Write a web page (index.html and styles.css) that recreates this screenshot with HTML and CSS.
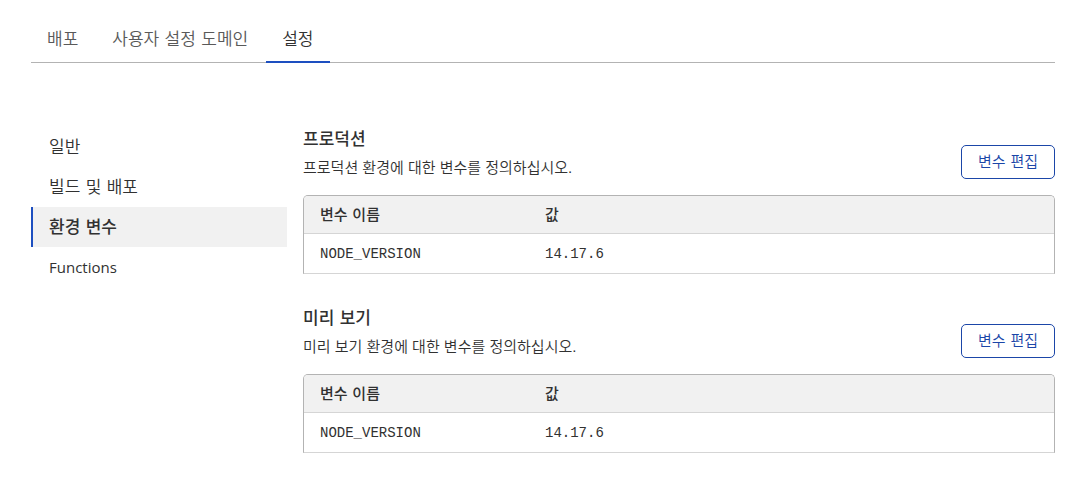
FILE: index.html
```html
<!DOCTYPE html>
<html lang="ko">
<head>
<meta charset="utf-8">
<meta name="viewport" content="width=device-width, initial-scale=1">
<title>설정 - 환경 변수</title>
<link rel="stylesheet" href="styles.css">
</head>
<body>
<nav class="tabs" aria-label="프로젝트">
  <a class="tab" href="#deployments">배포</a>
  <a class="tab" href="#domains">사용자 설정 도메인</a>
  <a class="tab tab-active" href="#settings" aria-current="page">설정</a>
</nav>
<div class="layout">
  <nav class="sidebar" aria-label="설정">
    <a class="side-link" href="#general">일반</a>
    <a class="side-link" href="#builds">빌드 및 배포</a>
    <a class="side-link side-link-active" href="#variables" aria-current="page">환경 변수</a>
    <a class="side-link side-link-latin" href="#functions">Functions</a>
  </nav>
  <main class="content">
    <section class="group">
      <header class="group-header">
        <div>
          <h2 class="title" id="production">프로덕션</h2>
          <p class="description">프로덕션 환경에 대한 변수를 정의하십시오.</p>
        </div>
        <button class="edit" type="button">변수 편집</button>
      </header>
      <table class="variables" aria-labelledby="production">
        <thead><tr><th class="name-column" scope="col">변수 이름</th><th scope="col">값</th></tr></thead>
        <tbody><tr><td>NODE_VERSION</td><td>14.17.6</td></tr></tbody>
      </table>
    </section>
    <section class="group">
      <header class="group-header">
        <div>
          <h2 class="title" id="preview">미리 보기</h2>
          <p class="description">미리 보기 환경에 대한 변수를 정의하십시오.</p>
        </div>
        <button class="edit" type="button">변수 편집</button>
      </header>
      <table class="variables" aria-labelledby="preview">
        <thead><tr><th class="name-column" scope="col">변수 이름</th><th scope="col">값</th></tr></thead>
        <tbody><tr><td>NODE_VERSION</td><td>14.17.6</td></tr></tbody>
      </table>
    </section>
  </main>
</div>
</body>
</html>
```
FILE: styles.css
```css
* {
  box-sizing: border-box;
}

body {
  margin: 0;
  padding: 14px 26px 24px 31px;
  background: #fff;
  color: #313131;
  font-family: "DejaVu Sans", "Noto Sans CJK KR", sans-serif;
  font-size: 15px;
  font-weight: 350;
  line-height: 24px;
}

.tabs {
  display: flex;
  gap: 2px;
  border-bottom: 1px solid #b3b3b3;
}

.tab {
  margin-bottom: -1px;
  padding: 13px 16px 10px;
  border-bottom: 2px solid transparent;
  color: #595959;
  font-size: 17px;
  text-decoration: none;
}

.tab-active {
  border-color: #1d4fc0;
  color: #313131;
}

.layout {
  display: flex;
  gap: 16px;
  padding-top: 64px;
}

.sidebar {
  display: flex;
  flex: 0 0 256px;
  flex-direction: column;
}

.side-link {
  padding: 8px 16px;
  border-left: 2px solid transparent;
  color: #313131;
  font-size: 17px;
  text-decoration: none;
}

.side-link-active {
  border-color: #1d4fc0;
  background: #f1f1f1;
  font-weight: 500;
}

.side-link-latin {
  font-family: "Open Sans", "Noto Sans", sans-serif;
  font-size: 15px;
  font-weight: 400;
}

.content {
  display: flex;
  flex: 1;
  flex-direction: column;
  gap: 32px;
  min-width: 0;
}

.group-header {
  display: flex;
  align-items: flex-end;
  justify-content: space-between;
  gap: 16px;
  padding-bottom: 16px;
}

.title {
  margin: 0 0 6px;
  font-size: 17px;
  font-weight: 500;
  line-height: 24px;
}

.description {
  margin: 0;
  font-family: "Liberation Sans", "Noto Sans CJK KR", sans-serif;
  line-height: 22px;
}

.edit {
  flex: none;
  height: 34px;
  padding: 0 16px;
  border: 1px solid #1b46a8;
  border-radius: 5px;
  background: #fff;
  color: #1b46a8;
  font: inherit;
}

.variables {
  width: 100%;
  border: 1px solid #b3b3b3;
  border-bottom-color: #d5d5d5;
  border-radius: 5px 5px 0 0;
  border-spacing: 0;
  table-layout: fixed;
  text-align: left;
}

.variables th {
  padding: 7px 16px 6px;
  border-bottom: 1px solid #d5d5d5;
  background: #f1f1f1;
  font-weight: 500;
}

.variables th:first-child {
  border-top-left-radius: 4px;
}

.variables th:last-child {
  border-top-right-radius: 4px;
}

.name-column {
  width: 30%;
}

.variables td {
  padding: 8px 16px 7px;
  font-family: "Liberation Mono", monospace;
  font-size: 14px;
}
```
